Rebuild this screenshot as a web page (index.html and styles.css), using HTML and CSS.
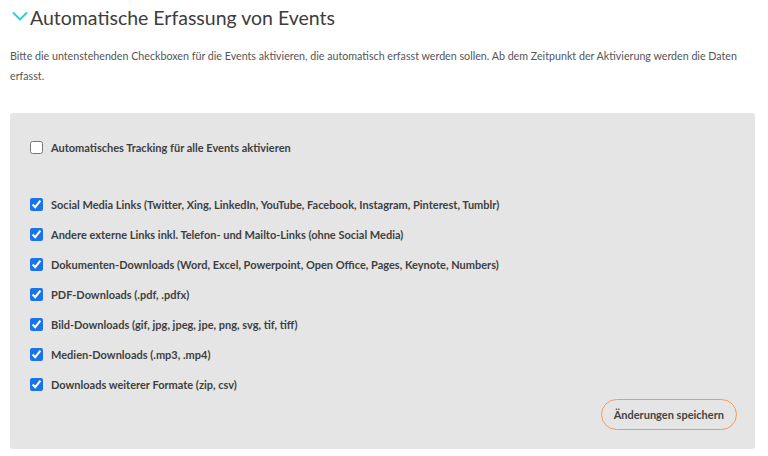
FILE: index.html
```html
<!DOCTYPE html>
<html lang="de">
  <head>
    <meta charset="UTF-8" />
    <meta name="viewport" content="width=device-width, initial-scale=1.0" />
    <title>Automatische Erfassung von Events</title>
    <link rel="stylesheet" href="styles.css">
  </head>
  <body>
    <div class="section">
      <h2 class="section-title">
        <svg class="chevron" width="16" height="10" viewBox="0 0 16 10">
          <path d="M1 1.5 L8 8.5 L15 1.5" fill="none" stroke="#22cfe0" stroke-width="1.8" />
        </svg>
        Automatische Erfassung von Events
      </h2>
      <p class="intro">
        Bitte die untenstehenden Checkboxen für die Events aktivieren, die automatisch erfasst werden sollen. Ab dem Zeitpunkt der Aktivierung werden die Daten erfasst.
      </p>

      <div class="panel">
        <label class="option all">
          <input type="checkbox" />
          Automatisches Tracking für alle Events aktivieren
        </label>

        <div class="options">
          <label class="option"><input type="checkbox" checked /> Social Media Links (Twitter, Xing, LinkedIn, YouTube, Facebook, Instagram, Pinterest, Tumblr)</label>
          <label class="option"><input type="checkbox" checked /> Andere externe Links inkl. Telefon- und Mailto-Links (ohne Social Media)</label>
          <label class="option"><input type="checkbox" checked /> Dokumenten-Downloads (Word, Excel, Powerpoint, Open Office, Pages, Keynote, Numbers)</label>
          <label class="option"><input type="checkbox" checked /> PDF-Downloads (.pdf, .pdfx)</label>
          <label class="option"><input type="checkbox" checked /> Bild-Downloads (gif, jpg, jpeg, jpe, png, svg, tif, tiff)</label>
          <label class="option"><input type="checkbox" checked /> Medien-Downloads (.mp3, .mp4)</label>
          <label class="option"><input type="checkbox" checked /> Downloads weiterer Formate (zip, csv)</label>
        </div>

        <div class="actions">
          <button class="save-button">Änderungen speichern</button>
        </div>
      </div>
    </div>
  </body>
</html>
```

FILE: styles.css
```css
body {
  margin: 0;
  background: #fff;
  font-family: Lato, "Open Sans", sans-serif;
  color: #444;
}

.section {
  padding: 0 13px 0 10px;
}

.section-title {
  display: flex;
  align-items: center;
  gap: 2px;
  margin: 0;
  padding-top: 2px;
  height: 30px;
  font-size: 19.5px;
  font-weight: 400;
  color: #3d3d3d;
}

.chevron {
  margin-left: 2px;
  margin-top: -2px;
}

.intro {
  margin: 14px 0 0;
  font-size: 10.7px;
  line-height: 20px;
  color: #555;
}

.panel {
  margin-top: 27px;
  background: #e5e5e5;
  border-radius: 3px;
  padding: 19px 20px 19px;
}

.option {
  display: flex;
  align-items: center;
  height: 30px;
  font-size: 11px;
  font-weight: 700;
  color: #3f3f3f;
}

.option input {
  width: 13px;
  height: 13px;
  margin: 0 8px 0 0;
  accent-color: #1a73e8;
}

.options {
  margin-top: 27px;
}

.actions {
  display: flex;
  justify-content: flex-end;
  margin-top: 0;
}

.save-button {
  height: 31px;
  padding: 0 12px;
  margin-right: -2px;
  white-space: nowrap;
  background: transparent;
  border: 1.5px solid #f39a5b;
  border-radius: 16px;
  font-family: Lato, "Open Sans", sans-serif;
  font-size: 11px;
  font-weight: 700;
  color: #444;
  cursor: pointer;
}
```
